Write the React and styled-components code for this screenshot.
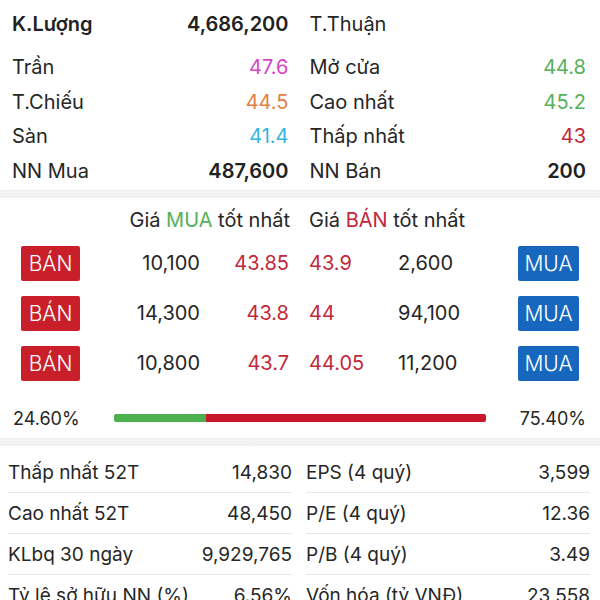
import styled, { createGlobalStyle } from 'styled-components';

const GlobalStyle = createGlobalStyle`
  html, body {
    margin: 0;
    padding: 0;
    background: #ffffff;
  }
  body {
    font-family: Inter, "Noto Sans", "Liberation Sans", sans-serif;
    color: #262626;
    -webkit-font-smoothing: antialiased;
  }
`;

const COLORS = {
  ceil: '#d944c6',
  ref: '#e2813f',
  floor: '#33b4e3',
  up: '#56b15a',
  down: '#c2283a',
  text: '#262626',
};

const summary = [
  [
    { label: 'Trần', value: '47.6', color: COLORS.ceil },
    { label: 'Mở cửa', value: '44.8', color: COLORS.up },
  ],
  [
    { label: 'T.Chiếu', value: '44.5', color: COLORS.ref },
    { label: 'Cao nhất', value: '45.2', color: COLORS.up },
  ],
  [
    { label: 'Sàn', value: '41.4', color: COLORS.floor },
    { label: 'Thấp nhất', value: '43', color: COLORS.down },
  ],
  [
    { label: 'NN Mua', value: '487,600', bold: true },
    { label: 'NN Bán', value: '200', bold: true },
  ],
];

const orders = [
  { bidQty: '10,100', bid: '43.85', ask: '43.9', askQty: '2,600' },
  { bidQty: '14,300', bid: '43.8', ask: '44', askQty: '94,100' },
  { bidQty: '10,800', bid: '43.7', ask: '44.05', askQty: '11,200' },
];

const stats = [
  [
    { label: 'Thấp nhất 52T', value: '14,830' },
    { label: 'EPS (4 quý)', value: '3,599' },
  ],
  [
    { label: 'Cao nhất 52T', value: '48,450' },
    { label: 'P/E (4 quý)', value: '12.36' },
  ],
  [
    { label: 'KLbq 30 ngày', value: '9,929,765' },
    { label: 'P/B (4 quý)', value: '3.49' },
  ],
  [
    { label: 'Tỷ lệ sở hữu NN (%)', value: '6.56%' },
    { label: 'Vốn hóa (tỷ VNĐ)', value: '23,558' },
  ],
];

const buyRatio = 24.6;

export default function App() {
  return (
    <>
      <GlobalStyle />
      <Page>
        <Summary>
          <SummaryHead>
            <Pair>
              <HeadLabel>K.Lượng</HeadLabel>
              <HeadValue>4,686,200</HeadValue>
            </Pair>
            <Pair>
              <Label>T.Thuận</Label>
            </Pair>
          </SummaryHead>
          {summary.map((row, i) => (
            <SummaryRow key={i}>
              {row.map((cell) => (
                <Pair key={cell.label}>
                  <Label>{cell.label}</Label>
                  <Value $color={cell.color} $bold={cell.bold}>{cell.value}</Value>
                </Pair>
              ))}
            </SummaryRow>
          ))}
        </Summary>

        <Separator />

        <Book>
          <BookHead>
            <BidTitle>
              Giá <Tag $color={COLORS.up}>MUA</Tag> tốt nhất
            </BidTitle>
            <AskTitle>
              Giá <Tag $color={COLORS.down}>BÁN</Tag> tốt nhất
            </AskTitle>
          </BookHead>
          {orders.map((o, i) => (
            <BookRow key={i}>
              <ActionButton $variant="sell">BÁN</ActionButton>
              <Qty $align="right">{o.bidQty}</Qty>
              <Price $align="right">{o.bid}</Price>
              <Price $align="left" $inset>{o.ask}</Price>
              <Qty $align="left">{o.askQty}</Qty>
              <ActionButton $variant="buy">MUA</ActionButton>
            </BookRow>
          ))}
          <RatioRow>
            <Percent>24.60%</Percent>
            <RatioBar>
              <BuyPart style={{ width: `${buyRatio}%` }} />
              <SellPart />
            </RatioBar>
            <Percent $right>75.40%</Percent>
          </RatioRow>
        </Book>

        <Separator />

        <Stats>
          {stats.map((row) =>
            row.map((cell) => (
              <StatRow key={cell.label}>
                <StatLabel>{cell.label}</StatLabel>
                <StatValue>{cell.value}</StatValue>
              </StatRow>
            ))
          )}
        </Stats>
      </Page>
    </>
  );
}

const Page = styled.div`
  width: 600px;
  height: 600px;
  overflow: hidden;
  background: #ffffff;
`;

const Summary = styled.section`
  padding: 5px 14px 2px 12px;
`;

const SummaryHead = styled.div`
  display: grid;
  grid-template-columns: 1fr 1fr;
  column-gap: 21px;
  height: 38px;
  margin-bottom: 7px;
`;

const SummaryRow = styled.div`
  display: grid;
  grid-template-columns: 1fr 1fr;
  column-gap: 21px;
  height: 34.5px;
`;

const Pair = styled.div`
  display: flex;
  align-items: center;
  justify-content: space-between;
  font-size: 20px;
`;

const Label = styled.span`
  color: ${COLORS.text};
`;

const HeadLabel = styled.span`
  font-weight: 600;
  color: #222;
`;

const HeadValue = styled.span`
  font-weight: 600;
  color: #222;
`;

const Value = styled.span`
  color: ${(p) => p.$color || '#222'};
  font-weight: ${(p) => (p.$bold ? 600 : 400)};
`;

const Separator = styled.div`
  height: 8px;
  background: linear-gradient(#f6f6f6, #efefef);
  box-shadow: inset 0 1px 1px rgba(0, 0, 0, 0.03);
`;

const Book = styled.section`
  padding: 4px 0 0 0;
`;

const BookHead = styled.div`
  display: grid;
  grid-template-columns: 269px 1fr;
  padding-left: 21px;
  height: 36px;
  align-items: center;
  font-size: 20px;
  color: ${COLORS.text};
`;

const BidTitle = styled.div`
  text-align: right;
`;

const AskTitle = styled.div`
  padding-left: 19px;
`;

const Tag = styled.span`
  color: ${(p) => p.$color};
`;

const BookRow = styled.div`
  display: grid;
  grid-template-columns: 59px 120px 89px 109px 120px 61px;
  padding-left: 21px;
  height: 50px;
  align-items: center;
  font-size: 20px;
`;

const ActionButton = styled.div`
  height: 35px;
  border-radius: 2px;
  display: flex;
  align-items: center;
  justify-content: center;
  color: #ffffff;
  font-size: 21px;
  font-weight: 300;
  background: ${(p) => (p.$variant === 'sell' ? '#c81f2a' : '#1767bf')};
`;

const Qty = styled.div`
  text-align: ${(p) => p.$align};
  color: ${COLORS.text};
`;

const Price = styled.div`
  text-align: ${(p) => p.$align};
  padding-left: ${(p) => (p.$inset ? '20px' : '0')};
  color: ${COLORS.down};
`;

const RatioRow = styled.div`
  display: grid;
  grid-template-columns: 101px 372px 1fr;
  align-items: center;
  padding: 0 14px 0 13px;
  height: 40px;
  margin-top: 10px;
`;

const Percent = styled.div`
  font-size: 18px;
  color: ${COLORS.text};
  text-align: ${(p) => (p.$right ? 'right' : 'left')};
`;

const RatioBar = styled.div`
  display: flex;
  height: 8px;
  border-radius: 2px;
  overflow: hidden;
`;

const BuyPart = styled.div`
  background: #4cb04f;
`;

const SellPart = styled.div`
  flex: 1;
  background: #c8172a;
`;

const Stats = styled.section`
  display: grid;
  grid-template-columns: 1fr 1fr;
  column-gap: 14px;
  padding: 6px 10px 0 8px;
`;

const StatRow = styled.div`
  display: flex;
  align-items: center;
  justify-content: space-between;
  height: 40px;
  border-bottom: 1px solid #e6e6e6;
  font-size: 19px;
  color: ${COLORS.text};
`;

const StatLabel = styled.span``;

const StatValue = styled.span``;
